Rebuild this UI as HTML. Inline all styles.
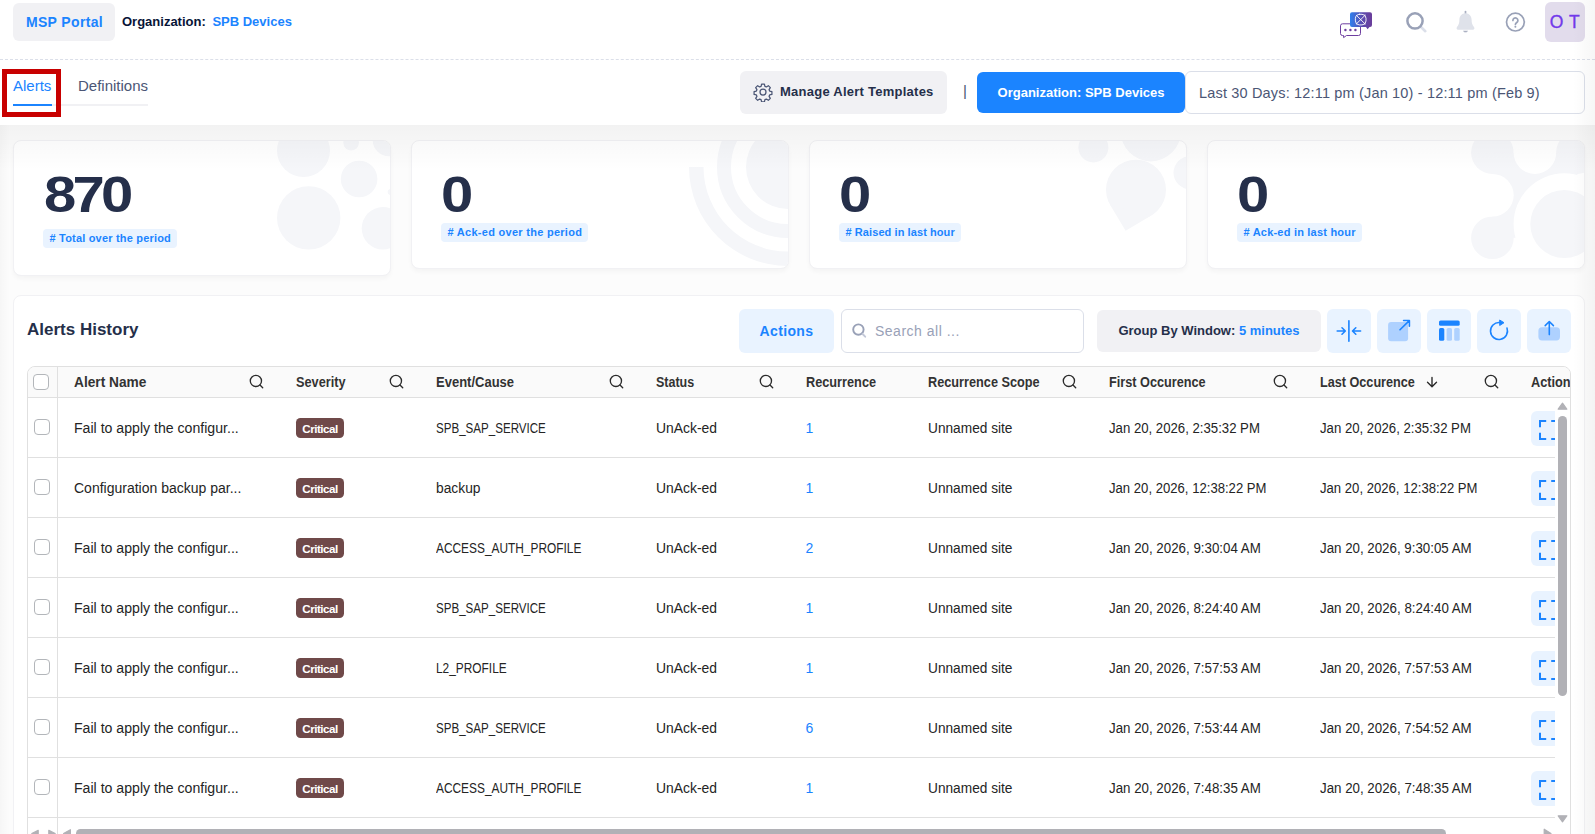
<!DOCTYPE html>
<html lang="en">
<head>
<meta charset="utf-8">
<title>Alerts</title>
<style>
*{box-sizing:border-box;margin:0;padding:0}
html,body{width:1595px;height:834px;overflow:hidden}
body{position:relative;background:#fcfcfc;font-family:"Liberation Sans",sans-serif;color:#071437;font-size:13px}
.abs{position:absolute}
.nw{white-space:nowrap}
/* header */
#hdr{left:0;top:0;width:1595px;height:60px;background:#fff;border-bottom:1px dashed #dbdfe9}
#msp{left:13px;top:3px;width:102px;height:38px;border-radius:6px;background:#f1f1f4;color:#1b84ff;font-weight:700;font-size:14px;line-height:39px;text-align:center;letter-spacing:.35px;padding-left:1px}
#org{left:122px;top:14px;font-size:13px;font-weight:700;line-height:16px;color:#071437}
#org b{color:#1b84ff;margin-left:3px}
#avatar{left:1545px;top:2px;width:40px;height:40px;border-radius:6px;background:#e2dcec;color:#7239ea;font-size:17.5px;line-height:41px;text-align:center;letter-spacing:.5px;-webkit-text-stroke:.35px #7239ea}
/* tabs row */
#tabs{left:0;top:60px;width:1595px;height:65px;background:#fff}
#tabline{left:13px;top:104px;width:135px;height:2px;background:#f1f1f4}
#tabactive{left:13px;top:104px;width:39px;height:2px;background:#1b84ff}
#t1{left:13px;top:77px;font-size:15px;line-height:18px;color:#1b84ff}
#t2{left:78px;top:77px;font-size:15px;line-height:18px;color:#4b5675}
#redbox{left:2px;top:69px;width:59px;height:48px;border:5px solid #c80000}
#manage{left:740px;top:71px;width:207px;height:43px;border-radius:6px;background:#f1f1f4;font-weight:700;font-size:13px;line-height:41px;color:#252f4a;padding-left:40px;letter-spacing:.25px}
#pipe{left:963px;top:82px;font-size:15px;color:#4b5675;line-height:18px}
#orgbtn{left:977px;top:72px;width:208px;height:41px;border-radius:6px;background:#1b84ff;color:#fff;font-weight:700;font-size:13px;line-height:41px;text-align:center}
#range{left:1185px;top:71px;width:400px;height:43px;border-radius:6px;border:1px solid #dbdfe9;background:#fff;color:#4b5675;font-size:14.5px;line-height:42px;padding-left:13px;letter-spacing:.17px}
/* cards */
.card{background:#fff;border:1px solid #f1f1f4;border-radius:8px;box-shadow:0 3px 4px rgba(0,0,0,.03);overflow:hidden}
.num{font-weight:700;font-size:50px;line-height:50px;color:#252f4a;letter-spacing:-3.2px;transform-origin:0 0;transform:scaleX(1.16)}
.badge{background:#e9f3ff;color:#1b84ff;font-weight:700;font-size:11px;line-height:19px;height:19px;border-radius:4px;padding:0 6.3px 0 6.500px;letter-spacing:.28px}
/* table card */
#tcard{left:13px;top:295px;width:1572px;height:560px;background:#fff;border:1px solid #f1f1f4;border-radius:8px}
#ah{left:27px;top:320px;font-size:17px;font-weight:700;line-height:20px;color:#252f4a}
.tb{top:309px;height:44px;border-radius:6px;background:#e9f3ff}
#actions{left:739px;width:95px;color:#1b84ff;font-weight:700;font-size:14px;line-height:44px;text-align:center;letter-spacing:.35px}
#search{left:841px;top:309px;width:243px;height:44px;border-radius:6px;border:1px solid #dbdfe9;background:#fff;color:#99a1b7;font-size:14px;line-height:42px;padding-left:33px;letter-spacing:.5px}
#group{left:1097px;top:310px;height:42px;width:224px;background:#f1f1f4;color:#252f4a;font-weight:700;font-size:13px;line-height:42px;text-align:center}
#group b{color:#1b84ff}
.ib{width:44px}
/* grid */
#grid{left:27px;top:366px;width:1544px;height:470px;border:1px solid #e0e0e0;border-radius:8px 8px 0 0;overflow:hidden;background:#fff;font-family:"Liberation Sans",sans-serif;color:#242424}
#ghead{left:0;top:0;width:1544px;height:31px;background:#fafafa;border-bottom:1px solid #e0e0e0}
.hc{transform-origin:0 50%;top:0;height:31px;line-height:31px;font-size:14px;font-weight:700;color:#333}
.row{left:0;width:1527px;height:60px;border-bottom:1px solid #e0e0e0;overflow:hidden}
.c{transform-origin:0 50%;top:0;height:59px;line-height:60px;font-size:14px;color:#242424}
.chk{left:6px;width:16px;height:16px;border:1px solid #b3b6ba;border-radius:4px;background:#fff}
.crit{left:268px;top:20px;width:48px;height:20px;border-radius:4.5px;background:#6f4949;color:#fff;font-weight:700;font-size:11.600px;line-height:21px;text-align:center;letter-spacing:-.5px}
.lnk{color:#1b84ff}
.ab{left:1503px;top:13px;width:40px;height:35px;border-radius:6px;background:#e9f3ff}
.sb{background:#b1b1b6}
#vline{left:29px;top:0;width:1px;height:470px;background:#e0e0e0}
</style>
</head>
<body>
<div id="hdr" class="abs"></div>
<div id="msp" class="abs nw">MSP Portal</div>
<div id="org" class="abs nw">Organization: <b>SPB Devices</b></div>

<svg class="abs" style="left:1338px;top:9px" width="38" height="32" viewBox="1338 9 38 32">
<defs><linearGradient id="cg" x1="0" y1="0" x2="1" y2="0"><stop offset="0" stop-color="#2f80ed"/><stop offset="0.55" stop-color="#5b4bb0"/><stop offset="1" stop-color="#6a3d9a"/></linearGradient></defs>
<path d="M1342.5 23.8H1358.5a2 2 0 0 1 2 2V33.5a2 2 0 0 1 -2 2H1346.5L1343.6 37.6V35.5H1342.5a2 2 0 0 1 -2 -2V25.8a2 2 0 0 1 2 -2Z" fill="#fff" stroke="#6e3fa0" stroke-width="1"/>
<circle cx="1345.4" cy="30" r="1.2" fill="#6e3fa0"/><circle cx="1350.4" cy="30" r="1.2" fill="#6e3fa0"/><circle cx="1355.4" cy="30" r="1.2" fill="#6e3fa0"/>
<path d="M1352 12.200H1370a2 2 0 0 1 2 2V25a2 2 0 0 1 -2 2H1369.500L1367.600 29.200L1366 27H1352a2 2 0 0 1 -2 -2V14.200a2 2 0 0 1 2 -2Z" fill="url(#cg)"/>
<g fill="none" stroke="#fff" stroke-width="0.900" stroke-linecap="round"><path d="M1356.300 15.200L1365.100 24M1365.100 15.200L1356.300 24"/><rect x="1355.400" y="14.300" width="10.600" height="10.600" rx="4"/></g>
</svg>
<svg class="abs" style="left:1402px;top:8px" width="28" height="28" viewBox="1402 8 28 28" fill="none"><path d="M1421 27L1425.3 31.2" stroke="#dbdfe9" stroke-width="2.6" stroke-linecap="round"/><circle cx="1415" cy="20.9" r="7.6" stroke="#99a1b7" stroke-width="2.5"/></svg>
<svg class="abs" style="left:1454px;top:9px" width="24" height="26" viewBox="1454 9 24 26"><path d="M1465.500 11.500V13.800" stroke="#a9afc1" stroke-width="1.700" stroke-linecap="round"/><path d="M1463.500 31.100H1467.500C1466.900 32.400 1464.100 32.400 1463.500 31.100Z" fill="#a9afc1" stroke="#a9afc1" stroke-width="0.600" stroke-linejoin="round"/><path d="M1465.500 13.200c3.900 0 6.100 3 6.100 6.600c0 3.200 0.700 5.200 2.400 7.200c0.900 1.100 0.400 2.700-1.100 2.700h-14.800c-1.500 0-2-1.600-1.100-2.700c1.700-2 2.400-4 2.400-7.200c0-3.600 2.200-6.600 6.100-6.600z" fill="#dfe2ea"/></svg>
<svg class="abs" style="left:1504px;top:10px" width="24" height="24" viewBox="1504 10 24 24" fill="none" stroke="#99a1b7"><circle cx="1515.400" cy="22.100" r="8.900" stroke-width="1.700"/><path d="M1512.900 20.400a2.500 2.500 0 1 1 3.900 2.100c-0.900 0.600-1.400 1-1.400 2" stroke-width="1.700" stroke-linecap="round"/><circle cx="1515.400" cy="26.800" r="1" fill="#99a1b7" stroke="none"/></svg>
<div id="avatar" class="abs nw">O T</div>

<div id="tabs" class="abs"></div>
<div id="tabline" class="abs"></div>
<div id="tabactive" class="abs"></div>
<div id="t1" class="abs nw">Alerts</div>
<div id="t2" class="abs nw">Definitions</div>
<div id="redbox" class="abs"></div>
<div id="manage" class="abs nw">Manage Alert Templates</div>
<svg class="abs" style="left:753px;top:82px" width="20" height="20" viewBox="0 0 24 24" fill="none" stroke="#4b5675" stroke-width="1.5" stroke-linejoin="round"><circle cx="12" cy="12" r="3.600"/><path d="M10.300 2.500h3.400l0.600 2.700l1.700 0.700l2.400-1.500l2.400 2.400l-1.500 2.400l0.700 1.700l2.700 0.600v3.400l-2.700 0.600l-0.700 1.700l1.500 2.400l-2.400 2.400l-2.400-1.500l-1.700 0.700l-0.600 2.700h-3.400l-0.600-2.700l-1.700-0.700l-2.400 1.500l-2.400-2.400l1.500-2.400l-0.700-1.700l-2.700-0.600v-3.400l2.700-0.600l0.700-1.700l-1.500-2.400l2.400-2.400l2.400 1.500l1.700-0.700z"/></svg>
<div id="pipe" class="abs">|</div>
<div id="orgbtn" class="abs nw">Organization: SPB Devices</div>
<div id="range" class="abs nw">Last 30 Days: 12:11 pm (Jan 10) - 12:11 pm (Feb 9)</div>

<!-- cards -->
<div class="abs card" style="left:13px;top:140px;width:378px;height:136px"></div>
<div class="abs card" style="left:411px;top:140px;width:378px;height:129px"></div>
<div class="abs card" style="left:809px;top:140px;width:378px;height:129px"></div>
<div class="abs card" style="left:1207px;top:140px;width:378px;height:129px"></div>
<svg class="abs" style="left:14px;top:141px" width="376" height="134" viewBox="14 141 376 134"><defs><clipPath id="k1"><rect x="14" y="141" width="376" height="134" rx="7"/></clipPath></defs><g clip-path="url(#k1)" fill="#f5f6f9"><circle cx="303.5" cy="150.6" r="26.5"/><circle cx="351.1" cy="142.8" r="7.8"/><circle cx="389" cy="140" r="16.300"/><circle cx="359.100" cy="179" r="18.300"/><circle cx="308.700" cy="217.900" r="31.700"/><circle cx="382.900" cy="228.300" r="21.200"/><circle cx="390.600" cy="192" r="3"/></g></svg>
<svg class="abs" style="left:412px;top:141px" width="376" height="127" viewBox="412 141 376 127"><defs><clipPath id="k2"><rect x="412" y="141" width="376" height="127" rx="7"/></clipPath></defs><g clip-path="url(#k2)" fill="#f5f6f9"><circle cx="788" cy="167" r="42"/><circle cx="788" cy="167" r="64" fill="none" stroke="#f5f6f9" stroke-width="14"/><path d="M689 167H703.500A84.500 84.500 0 0 0 788 251.500V266A99 99 0 0 1 689 167Z"/></g></svg>
<svg class="abs" style="left:810px;top:141px" width="376" height="127" viewBox="810 141 376 127"><defs><clipPath id="k3"><rect x="810" y="141" width="376" height="127" rx="7"/></clipPath></defs><g clip-path="url(#k3)" fill="#f5f6f9"><circle cx="1093.400" cy="147.500" r="15"/><circle cx="1150.800" cy="131.400" r="30"/><circle cx="1190" cy="172.700" r="16.500"/><circle cx="1136" cy="189.700" r="30"/><path d="M1110.200 205L1125.600 230.800L1151.300 215.500Z"/></g></svg>
<svg class="abs" style="left:1208px;top:141px" width="376" height="127" viewBox="1208 141 376 127"><defs><clipPath id="k4"><rect x="1208" y="141" width="376" height="127" rx="7"/></clipPath></defs><g clip-path="url(#k4)" fill="#f5f6f9"><circle cx="1492.400" cy="152.600" r="21.300"/><circle cx="1577.400" cy="152.600" r="21.300"/><circle cx="1492.400" cy="237.800" r="21.300"/><rect x="1492.400" y="152.600" width="85" height="85.200"/><g fill="#fff"><circle cx="1492.400" cy="195.200" r="21.300"/><circle cx="1534.900" cy="152.600" r="21.300"/><circle cx="1564.300" cy="224" r="50.700"/></g><circle cx="1564.300" cy="224" r="34"/></g></svg>
<div class="abs num nw" style="left:44px;top:170px">870</div>
<div class="abs num nw" style="left:441px;top:170px">0</div>
<div class="abs num nw" style="left:839px;top:170px">0</div>
<div class="abs num nw" style="left:1237px;top:170px">0</div>
<div class="abs badge nw" style="left:43px;top:229px;letter-spacing:.19px"># Total over the period</div>
<div class="abs badge nw" style="left:441px;top:223px"># Ack-ed over the period</div>
<div class="abs badge nw" style="left:839px;top:223px;letter-spacing:.08px"># Raised in last hour</div>
<div class="abs badge nw" style="left:1237px;top:223px;letter-spacing:.21px"># Ack-ed in last hour</div>

<div class="abs" style="left:0;top:125px;width:1595px;height:45px;background:linear-gradient(rgba(0,0,0,.038),rgba(0,0,0,0));pointer-events:none"></div>
<!-- table card -->
<div id="tcard" class="abs"></div>
<div id="ah" class="abs nw">Alerts History</div>
<div id="actions" class="abs tb nw">Actions</div>
<div id="search" class="abs nw">Search all ...</div>
<div id="group" class="abs tb nw">Group By Window: <b>5 minutes</b></div>
<div class="abs tb ib" style="left:1327px"></div>
<div class="abs tb ib" style="left:1377px"></div>
<div class="abs tb ib" style="left:1427px"></div>
<div class="abs tb ib" style="left:1477px"></div>
<div class="abs tb ib" style="left:1527px"></div>


<svg class="abs" style="left:1327px;top:309px" width="244" height="44" viewBox="1327 309 244 44" fill="none" stroke="#1b84ff" stroke-width="1.600" stroke-linecap="round" stroke-linejoin="round">
<path d="M1348.900 320.700V341.200M1337.200 331H1345.200M1342 327.800L1345.300 331L1342 334.200M1360.600 331H1352.600M1355.800 327.800L1352.500 331L1355.800 334.200"/>
<rect x="1388.100" y="322" width="20" height="19.200" rx="3" fill="#aed1ff" stroke="none"/>
<path d="M1400 329.800L1409.300 320.600M1403.600 320.500H1409.400V326.300"/>
<rect x="1439" y="320.400" width="20.700" height="5.400" rx="1.600" fill="#1b84ff" stroke="none"/>
<rect x="1439" y="328" width="5.300" height="12.800" rx="1.600" fill="#1b84ff" stroke="none"/>
<rect x="1446.600" y="328" width="5.400" height="12.800" rx="1.600" fill="#aed1ff" stroke="none"/>
<rect x="1454.200" y="328" width="5.500" height="12.800" rx="1.600" fill="#aed1ff" stroke="none"/>
<path d="M1507 328.100A8.500 8.500 0 1 1 1499.600 322.500"/>
<path d="M1500 320.200L1504 322.700L1500 325.300Z" fill="#1b84ff" stroke-width="1"/>
<rect x="1538.400" y="327.200" width="21.600" height="13.200" rx="3.600" fill="#aed1ff" stroke="none"/>
<path d="M1549.300 334.600V321.700M1545.200 325.600L1549.300 321.500L1553.400 325.600"/>
</svg>
<svg class="abs" style="left:851px;top:322px" width="17" height="17" viewBox="851 322 17 17" fill="none" stroke="#99a1b7" stroke-width="1.900" stroke-linecap="round"><circle cx="858.400" cy="329.600" r="5.200"/><path d="M862.600 334L865.200 336.700" stroke="#c4c9d8"/></svg>
<div id="grid" class="abs">
<div id="ghead" class="abs"></div>
<div class="abs chk" style="left:5px;top:7px"></div>
<div class="abs hc nw" style="left:46px;transform:scaleX(0.979);">Alert Name</div>
<div class="abs hc nw" style="left:268px;transform:scaleX(0.909);">Severity</div>
<div class="abs hc nw" style="left:408px;transform:scaleX(0.929);">Event/Cause</div>
<div class="abs hc nw" style="left:628px;transform:scaleX(0.893);">Status</div>
<div class="abs hc nw" style="left:778px;transform:scaleX(0.909);">Recurrence</div>
<div class="abs hc nw" style="left:900px;transform:scaleX(0.908);">Recurrence Scope</div>
<div class="abs hc nw" style="left:1081px;transform:scaleX(0.906);">First Occurence</div>
<div class="abs hc nw" style="left:1292px;transform:scaleX(0.903);">Last Occurence</div>
<div class="abs hc nw" style="left:1503px;transform:scaleX(.91)">Action</div>
<svg class="abs" style="left:220.5px;top:7px" width="15" height="15" viewBox="0 0 15 15" fill="none" stroke="#2b2b2b" stroke-width="1.35" stroke-linecap="round"><circle cx="6.9" cy="6.9" r="5.6"/><path d="M11 11L13.700 13.700"/></svg>
<svg class="abs" style="left:360.5px;top:7px" width="15" height="15" viewBox="0 0 15 15" fill="none" stroke="#2b2b2b" stroke-width="1.35" stroke-linecap="round"><circle cx="6.9" cy="6.9" r="5.6"/><path d="M11 11L13.700 13.700"/></svg>
<svg class="abs" style="left:580.5px;top:7px" width="15" height="15" viewBox="0 0 15 15" fill="none" stroke="#2b2b2b" stroke-width="1.35" stroke-linecap="round"><circle cx="6.9" cy="6.9" r="5.6"/><path d="M11 11L13.700 13.700"/></svg>
<svg class="abs" style="left:730.5px;top:7px" width="15" height="15" viewBox="0 0 15 15" fill="none" stroke="#2b2b2b" stroke-width="1.35" stroke-linecap="round"><circle cx="6.9" cy="6.9" r="5.6"/><path d="M11 11L13.700 13.700"/></svg>
<svg class="abs" style="left:1033.5px;top:7px" width="15" height="15" viewBox="0 0 15 15" fill="none" stroke="#2b2b2b" stroke-width="1.35" stroke-linecap="round"><circle cx="6.9" cy="6.9" r="5.6"/><path d="M11 11L13.700 13.700"/></svg>
<svg class="abs" style="left:1244.5px;top:7px" width="15" height="15" viewBox="0 0 15 15" fill="none" stroke="#2b2b2b" stroke-width="1.35" stroke-linecap="round"><circle cx="6.9" cy="6.9" r="5.6"/><path d="M11 11L13.700 13.700"/></svg>
<svg class="abs" style="left:1455.5px;top:7px" width="15" height="15" viewBox="0 0 15 15" fill="none" stroke="#2b2b2b" stroke-width="1.35" stroke-linecap="round"><circle cx="6.9" cy="6.9" r="5.6"/><path d="M11 11L13.700 13.700"/></svg>
<svg class="abs" style="left:1397px;top:8px" width="14" height="14" viewBox="0 0 14 14" fill="none" stroke="#2b2b2b" stroke-width="1.4" stroke-linecap="round" stroke-linejoin="round"><path d="M7 2.500V11.600M2.500 7.200L7 11.700L11.500 7.200"/></svg>
<div class="abs row" style="top:31px">
<div class="abs chk" style="left:6px;top:21px"></div>
<div class="abs c nw" style="left:46px;transform:scaleX(1.008);">Fail to apply the configur...</div>
<div class="abs crit nw">Critical</div>
<div class="abs c nw" style="left:408px;transform:scaleX(0.827);">SPB_SAP_SERVICE</div>
<div class="abs c nw" style="left:628px;transform:scaleX(0.992);">UnAck-ed</div>
<div class="abs c nw lnk" style="left:777.4px">1</div>
<div class="abs c nw" style="left:900px;transform:scaleX(0.978);">Unnamed site</div>
<div class="abs c nw" style="left:1081px;transform:scaleX(0.941);">Jan 20, 2026, 2:35:32 PM</div>
<div class="abs c nw" style="left:1292px;transform:scaleX(0.941);">Jan 20, 2026, 2:35:32 PM</div>
<div class="abs ab"><svg class="abs" style="left:8px;top:8.500px" width="20" height="20" viewBox="0 0 20 20" fill="none" stroke="#1b84ff" stroke-width="2"><path d="M1 7.300V1H7.200M12.200 1H19M1 12.700V19H7.200M12.200 19H19"/></svg></div>
</div>
<div class="abs row" style="top:91px">
<div class="abs chk" style="left:6px;top:21px"></div>
<div class="abs c nw" style="left:46px;">Configuration backup par...</div>
<div class="abs crit nw">Critical</div>
<div class="abs c nw" style="left:408px;transform:scaleX(0.985);">backup</div>
<div class="abs c nw" style="left:628px;transform:scaleX(0.992);">UnAck-ed</div>
<div class="abs c nw lnk" style="left:777.4px">1</div>
<div class="abs c nw" style="left:900px;transform:scaleX(0.978);">Unnamed site</div>
<div class="abs c nw" style="left:1081px;transform:scaleX(0.937);">Jan 20, 2026, 12:38:22 PM</div>
<div class="abs c nw" style="left:1292px;transform:scaleX(0.937);">Jan 20, 2026, 12:38:22 PM</div>
<div class="abs ab"><svg class="abs" style="left:8px;top:8.500px" width="20" height="20" viewBox="0 0 20 20" fill="none" stroke="#1b84ff" stroke-width="2"><path d="M1 7.300V1H7.200M12.200 1H19M1 12.700V19H7.200M12.200 19H19"/></svg></div>
</div>
<div class="abs row" style="top:151px">
<div class="abs chk" style="left:6px;top:21px"></div>
<div class="abs c nw" style="left:46px;transform:scaleX(1.008);">Fail to apply the configur...</div>
<div class="abs crit nw">Critical</div>
<div class="abs c nw" style="left:408px;transform:scaleX(0.849);">ACCESS_AUTH_PROFILE</div>
<div class="abs c nw" style="left:628px;transform:scaleX(0.992);">UnAck-ed</div>
<div class="abs c nw lnk" style="left:777.4px">2</div>
<div class="abs c nw" style="left:900px;transform:scaleX(0.978);">Unnamed site</div>
<div class="abs c nw" style="left:1081px;transform:scaleX(0.951);">Jan 20, 2026, 9:30:04 AM</div>
<div class="abs c nw" style="left:1292px;transform:scaleX(0.950);">Jan 20, 2026, 9:30:05 AM</div>
<div class="abs ab"><svg class="abs" style="left:8px;top:8.500px" width="20" height="20" viewBox="0 0 20 20" fill="none" stroke="#1b84ff" stroke-width="2"><path d="M1 7.300V1H7.200M12.200 1H19M1 12.700V19H7.200M12.200 19H19"/></svg></div>
</div>
<div class="abs row" style="top:211px">
<div class="abs chk" style="left:6px;top:21px"></div>
<div class="abs c nw" style="left:46px;transform:scaleX(1.008);">Fail to apply the configur...</div>
<div class="abs crit nw">Critical</div>
<div class="abs c nw" style="left:408px;transform:scaleX(0.827);">SPB_SAP_SERVICE</div>
<div class="abs c nw" style="left:628px;transform:scaleX(0.992);">UnAck-ed</div>
<div class="abs c nw lnk" style="left:777.4px">1</div>
<div class="abs c nw" style="left:900px;transform:scaleX(0.978);">Unnamed site</div>
<div class="abs c nw" style="left:1081px;transform:scaleX(0.951);">Jan 20, 2026, 8:24:40 AM</div>
<div class="abs c nw" style="left:1292px;transform:scaleX(0.951);">Jan 20, 2026, 8:24:40 AM</div>
<div class="abs ab"><svg class="abs" style="left:8px;top:8.500px" width="20" height="20" viewBox="0 0 20 20" fill="none" stroke="#1b84ff" stroke-width="2"><path d="M1 7.300V1H7.200M12.200 1H19M1 12.700V19H7.200M12.200 19H19"/></svg></div>
</div>
<div class="abs row" style="top:271px">
<div class="abs chk" style="left:6px;top:21px"></div>
<div class="abs c nw" style="left:46px;transform:scaleX(1.008);">Fail to apply the configur...</div>
<div class="abs crit nw">Critical</div>
<div class="abs c nw" style="left:408px;transform:scaleX(0.849);">L2_PROFILE</div>
<div class="abs c nw" style="left:628px;transform:scaleX(0.992);">UnAck-ed</div>
<div class="abs c nw lnk" style="left:777.4px">1</div>
<div class="abs c nw" style="left:900px;transform:scaleX(0.978);">Unnamed site</div>
<div class="abs c nw" style="left:1081px;transform:scaleX(0.951);">Jan 20, 2026, 7:57:53 AM</div>
<div class="abs c nw" style="left:1292px;transform:scaleX(0.951);">Jan 20, 2026, 7:57:53 AM</div>
<div class="abs ab"><svg class="abs" style="left:8px;top:8.500px" width="20" height="20" viewBox="0 0 20 20" fill="none" stroke="#1b84ff" stroke-width="2"><path d="M1 7.300V1H7.200M12.200 1H19M1 12.700V19H7.200M12.200 19H19"/></svg></div>
</div>
<div class="abs row" style="top:331px">
<div class="abs chk" style="left:6px;top:21px"></div>
<div class="abs c nw" style="left:46px;transform:scaleX(1.008);">Fail to apply the configur...</div>
<div class="abs crit nw">Critical</div>
<div class="abs c nw" style="left:408px;transform:scaleX(0.827);">SPB_SAP_SERVICE</div>
<div class="abs c nw" style="left:628px;transform:scaleX(0.992);">UnAck-ed</div>
<div class="abs c nw lnk" style="left:777.4px">6</div>
<div class="abs c nw" style="left:900px;transform:scaleX(0.978);">Unnamed site</div>
<div class="abs c nw" style="left:1081px;transform:scaleX(0.951);">Jan 20, 2026, 7:53:44 AM</div>
<div class="abs c nw" style="left:1292px;transform:scaleX(0.950);">Jan 20, 2026, 7:54:52 AM</div>
<div class="abs ab"><svg class="abs" style="left:8px;top:8.500px" width="20" height="20" viewBox="0 0 20 20" fill="none" stroke="#1b84ff" stroke-width="2"><path d="M1 7.300V1H7.200M12.200 1H19M1 12.700V19H7.200M12.200 19H19"/></svg></div>
</div>
<div class="abs row" style="top:391px">
<div class="abs chk" style="left:6px;top:21px"></div>
<div class="abs c nw" style="left:46px;transform:scaleX(1.008);">Fail to apply the configur...</div>
<div class="abs crit nw">Critical</div>
<div class="abs c nw" style="left:408px;transform:scaleX(0.849);">ACCESS_AUTH_PROFILE</div>
<div class="abs c nw" style="left:628px;transform:scaleX(0.992);">UnAck-ed</div>
<div class="abs c nw lnk" style="left:777.4px">1</div>
<div class="abs c nw" style="left:900px;transform:scaleX(0.978);">Unnamed site</div>
<div class="abs c nw" style="left:1081px;transform:scaleX(0.951);">Jan 20, 2026, 7:48:35 AM</div>
<div class="abs c nw" style="left:1292px;transform:scaleX(0.951);">Jan 20, 2026, 7:48:35 AM</div>
<div class="abs ab"><svg class="abs" style="left:8px;top:8.500px" width="20" height="20" viewBox="0 0 20 20" fill="none" stroke="#1b84ff" stroke-width="2"><path d="M1 7.300V1H7.200M12.200 1H19M1 12.700V19H7.200M12.200 19H19"/></svg></div>
</div>
<div class="abs sb" style="left:1530px;top:49px;width:9px;height:280px;border-radius:4.500px"></div>
<svg class="abs" style="left:1529px;top:35px" width="11" height="9" viewBox="0 0 11 9"><path d="M5.500 1.200L9.800 7.200H1.200Z" fill="#b1b1b6" stroke="#b1b1b6" stroke-width="1.200" stroke-linejoin="round"/></svg>
<svg class="abs" style="left:1529px;top:447px" width="11" height="9" viewBox="0 0 11 9"><path d="M5.500 7.800L9.800 1.800H1.200Z" fill="#b1b1b6" stroke="#b1b1b6" stroke-width="1.200" stroke-linejoin="round"/></svg>
<div class="abs sb" style="left:48px;top:462px;width:1370px;height:9px;border-radius:4.500px"></div>
<svg class="abs" style="left:2px;top:461px" width="42" height="12" viewBox="0 0 42 12" fill="#b1b1b6" stroke="#b1b1b6" stroke-width="1.200" stroke-linejoin="round"><path d="M1.800 5.500L8.200 2.300V8.700Z"/><path d="M25.200 5.500L18.800 2.300V8.700Z"/><path d="M33.600 5.500L40.400 1.700V9.300Z"/></svg>
<svg class="abs" style="left:1514px;top:461px" width="12" height="12" viewBox="0 0 12 12" fill="#b1b1b6" stroke="#b1b1b6" stroke-width="1.200" stroke-linejoin="round"><path d="M9 5.500L2.200 1.200V9.800Z"/></svg>
<div id="vline" class="abs"></div>
</div>
<div class="abs" style="left:1573px;top:0;width:22px;height:834px;background:linear-gradient(to left,rgba(0,0,0,.035),rgba(0,0,0,0));pointer-events:none"></div>
<div class="abs" style="left:0;top:125px;width:10px;height:709px;background:linear-gradient(to right,rgba(0,0,0,.025),rgba(0,0,0,0));pointer-events:none"></div>
</body>
</html>
